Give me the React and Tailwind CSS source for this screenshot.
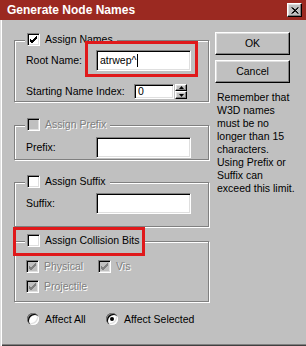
import React from "react";

const sunken = "bg-white border border-t-[#808080] border-l-[#808080] border-b-white border-r-white shadow-[inset_1px_1px_0_#000,inset_-1px_-1px_0_#dfdfdf]";
const raised = "bg-[#c0c0c0] border border-t-white border-l-white border-b-[#000] border-r-[#000] shadow-[inset_-1px_-1px_0_#808080,inset_1px_1px_0_#dfdfdf]";

const Check = ({ checked, disabled }) => (
  <span className={`w-[13px] h-[13px] shrink-0 flex items-center justify-center ${sunken} ${disabled ? "!bg-[#c0c0c0]" : ""}`}>
    {checked && (
      <svg width="9" height="9" viewBox="0 0 9 9">
        <path d="M1 4 L3 6 L8 1 M1 5 L3 7 L8 2 M1 6 L3 8 L8 3" stroke={disabled ? "#808080" : "#000"} strokeWidth="1" fill="none" shapeRendering="crispEdges" />
      </svg>
    )}
  </span>
);

const Label = ({ children, disabled, className = "" }) => (
  <span className={`whitespace-nowrap leading-none ${disabled ? "text-[#808080] [text-shadow:1px_1px_0_#fff]" : "text-black"} ${className}`}>{children}</span>
);

const Radio = ({ on }) => (
  <span className="w-[12px] h-[12px] rounded-full flex items-center justify-center bg-white shadow-[inset_1px_1px_0_#808080,inset_2px_2px_0_#000,inset_-1px_-1px_0_#fff,inset_-2px_-2px_0_#dfdfdf]">
    {on && <span className="w-[4px] h-[4px] rounded-full bg-black" />}
  </span>
);

const Group = ({ title, checked, disabled, h, mt, children }) => (
  <div className={`relative w-[195px] border border-[#808080] shadow-[1px_1px_0_#fff,inset_1px_1px_0_#fff] ${h} ${mt}`}>
    <div className="absolute left-[10px] -top-[8px] flex items-center gap-[5px] bg-[#c0c0c0] pl-[2px] pr-[4px]">
      <Check checked={checked} disabled={disabled} />
      <Label disabled={disabled}>{title}</Label>
    </div>
    {children}
  </div>
);

export default function App() {
  return (
    <div className="w-[306px] h-[346px] bg-[#c0c0c0] font-['Liberation_Sans',Arial,sans-serif] text-[10.5px] shadow-[inset_1px_0_0_#dfdfdf,inset_2px_0_0_#fff,inset_0_-1px_0_#404040,inset_0_-2px_0_#808080] overflow-hidden">
      <div className="h-[20px] bg-[#9b2921] flex items-center justify-between pl-[7px] pr-[4px]">
        <span className="text-white font-bold text-[12px] leading-none">Generate Node Names</span>
        <span className={`w-[15px] h-[14px] flex items-center justify-center ${raised}`}>
          <svg width="8" height="7" viewBox="0 0 8 7">
            <path d="M0.5 0.5 L7 6.5 M1.5 0.5 L7.5 6.5 M7 0.5 L0.5 6.5 M7.5 0.5 L1.5 6.5" stroke="#000" strokeWidth="1" />
          </svg>
        </span>
      </div>
      <div className="flex">
        <div className="pl-[14px] w-[210px]">
          <Group title="Assign Names" checked h="h-[62px]" mt="mt-[20px]">
            <div className="flex items-center pl-[11px] mt-[9px]">
              <Label className="w-[70px]">Root Name:</Label>
              <div className={`w-[95px] h-[21px] flex items-center pl-[3px] ${sunken}`}>
                <span className="leading-none">atrwep^</span>
                <span className="w-px h-[13px] bg-black ml-[1px]" />
              </div>
            </div>
            <div className="flex items-center pl-[11px] mt-[13px]">
              <Label className="w-[108px]">Starting Name Index:</Label>
              <div className={`w-[40px] h-[15px] flex items-center pl-[3px] ${sunken}`}>
                <span className="leading-none">0</span>
              </div>
              <div className="ml-[1px] w-[12px] h-[15px] flex flex-col">
                <span className={`h-[7px] flex items-center justify-center ${raised}`}>
                  <svg width="5" height="3" viewBox="0 0 5 3"><path d="M2.5 0 L5 3 L0 3 Z" fill="#000" /></svg>
                </span>
                <span className={`h-[8px] flex items-center justify-center ${raised}`}>
                  <svg width="5" height="3" viewBox="0 0 5 3"><path d="M0 0 L5 0 L2.5 3 Z" fill="#000" /></svg>
                </span>
              </div>
            </div>
            <div className="absolute left-[70px] top-[0px] w-[113px] h-[36px] border-[3px] border-[#e0191b]" />
          </Group>

          <Group title="Assign Prefix" disabled h="h-[35px]" mt="mt-[23px]">
            <div className="flex items-center pl-[11px] mt-[11px]">
              <Label className="w-[70px]">Prefix:</Label>
              <div className={`w-[95px] h-[21px] ${sunken}`} />
            </div>
          </Group>

          <Group title="Assign Suffix" h="h-[45px]" mt="mt-[22px]">
            <div className="flex items-center pl-[11px] mt-[10px]">
              <Label className="w-[70px]">Suffix:</Label>
              <div className={`w-[95px] h-[21px] ${sunken}`} />
            </div>
          </Group>

          <Group title="Assign Collision Bits" h="h-[61px]" mt="mt-[14px]">
            <div className="absolute -left-[2px] -top-[15px] w-[132px] h-[29px] border-[3px] border-[#e0191b]" />
            <div className="flex items-center pl-[11px] mt-[18px]">
              <div className="flex items-center gap-[5px] w-[72px]">
                <Check checked disabled />
                <Label disabled>Physical</Label>
              </div>
              <div className="flex items-center gap-[5px]">
                <Check checked disabled />
                <Label disabled>Vis</Label>
              </div>
            </div>
            <div className="flex items-center gap-[5px] pl-[11px] mt-[7px]">
              <Check checked disabled />
              <Label disabled>Projectile</Label>
            </div>
          </Group>

          <div className="flex items-center mt-[11px] pl-[13px]">
            <div className="flex items-center gap-[6px] w-[79px]">
              <Radio />
              <Label>Affect All</Label>
            </div>
            <div className="flex items-center gap-[6px]">
              <Radio on />
              <Label>Affect Selected</Label>
            </div>
          </div>
        </div>

        <div className="pl-[5px] pt-[12px] w-[90px]">
          <div className={`w-[75px] h-[23px] flex items-center justify-center ${raised}`}>
            <span className="leading-none">OK</span>
          </div>
          <div className={`w-[75px] h-[23px] mt-[5px] flex items-center justify-center ${raised}`}>
            <span className="leading-none">Cancel</span>
          </div>
          <p className="mt-[8px] pl-[2px] leading-[13px]">
            Remember that<br />W3D names<br />must be no<br />longer than 15<br />characters.<br />Using Prefix or<br />Suffix can<br />exceed this limit.
          </p>
        </div>
      </div>
    </div>
  );
}
